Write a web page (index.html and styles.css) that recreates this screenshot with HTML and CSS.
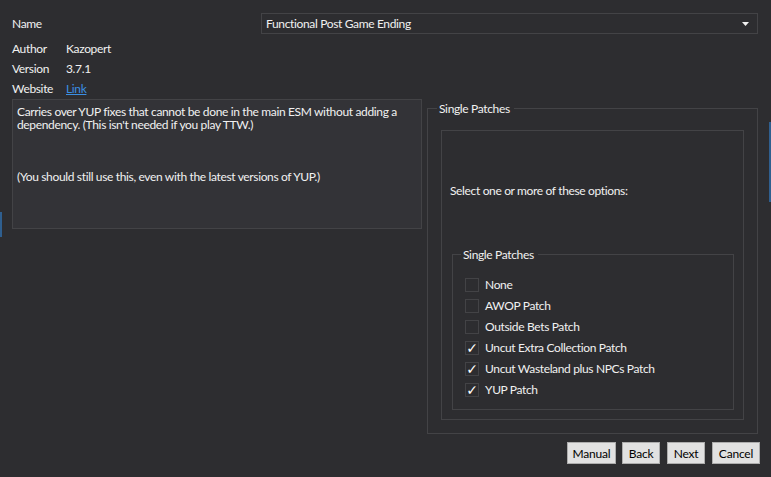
FILE: index.html
```html
<!DOCTYPE html>
<html>
<head>
<meta charset="utf-8">
<link rel="stylesheet" href="styles.css">
</head>
<body>
<div class="page">
  <div class="name-row">
    <span class="label">Name</span>
    <div class="dropdown">
      <span>Functional Post Game Ending</span>
      <svg class="arrow" width="8" height="5" viewBox="0 0 8 5"><path d="M0 0H7L3.5 4Z" fill="#f1f1f1"/></svg>
    </div>
  </div>
  <div class="info">
    <div class="info-row"><span class="label">Author</span><span class="value">Kazopert</span></div>
    <div class="info-row"><span class="label">Version</span><span class="value">3.7.1</span></div>
    <div class="info-row"><span class="label">Website</span><a class="value link" href="#">Link</a></div>
  </div>
  <div class="main">
    <div class="desc">Carries over YUP fixes that cannot be done in the main ESM without adding a dependency. (This isn't needed if you play TTW.)



(You should still use this, even with the latest versions of YUP.)</div>
    <fieldset class="group outer">
      <legend>Single Patches</legend>
      <div class="panel">
        <p class="prompt">Select one or more of these options:</p>
        <fieldset class="group inner">
          <legend>Single Patches</legend>
          <div class="opt"><span class="box"></span><span>None</span></div>
          <div class="opt"><span class="box"></span><span>AWOP Patch</span></div>
          <div class="opt"><span class="box"></span><span>Outside Bets Patch</span></div>
          <div class="opt"><span class="box checked">✓</span><span>Uncut Extra Collection Patch</span></div>
          <div class="opt"><span class="box checked">✓</span><span>Uncut Wasteland plus NPCs Patch</span></div>
          <div class="opt"><span class="box checked">✓</span><span>YUP Patch</span></div>
        </fieldset>
      </div>
    </fieldset>
  </div>
  <div class="buttons">
    <button class="btn btn-manual">Manual</button>
    <button class="btn btn-back">Back</button>
    <button class="btn btn-next">Next</button>
    <button class="btn btn-cancel">Cancel</button>
  </div>
</div>
<div class="edge edge-left"></div>
<div class="edge edge-right"></div>
</body>
</html>
```

FILE: styles.css
```css
html, body {
  margin: 0;
  padding: 0;
  background: #2d2d30;
  width: 771px;
  height: 477px;
  overflow: hidden;
}
body {
  font-family: Lato, "Noto Sans", sans-serif;
  font-size: 12px;
  line-height: 15px;
  letter-spacing: -0.35px;
  color: #f1f1f1;
  position: relative;
}
.page {
  display: flex;
  flex-direction: column;
  padding: 13px 12px 0 12px;
}
.name-row {
  display: flex;
  align-items: center;
  height: 21px;
}
.name-row .label {
  width: 249px;
}
.dropdown {
  box-sizing: border-box;
  width: 497px;
  height: 21px;
  border: 1px solid #434346;
  display: flex;
  align-items: center;
  justify-content: space-between;
  padding: 0 7px 0 4px;
}
.arrow { margin-top: 1px; }
.info {
  margin-top: 4px;
  display: flex;
  flex-direction: column;
}
.info-row {
  display: flex;
  align-items: center;
  height: 20px;
}
.info-row .label { width: 54px; }
.link {
  color: #3b8fe3;
  text-decoration: underline;
}
.main {
  display: flex;
  margin-top: 1px;
  gap: 5px;
}
.desc {
  box-sizing: border-box;
  width: 410px;
  height: 130px;
  background: #333337;
  border: 1px solid #434346;
  padding: 5px 4px 0 4px;
  white-space: pre-wrap;
  line-height: 13px;
}
.group {
  border: 1px solid #434346;
  margin: 0;
  min-width: 0;
}
.group legend {
  padding: 0 4px 0 2px;
  margin-left: -4px;
  line-height: 15px;
}
.outer {
  box-sizing: border-box;
  width: 331px;
  margin-top: 2px;
  padding: 14px 13px 13px 13px;
}
.panel {
  border: 1px solid #434346;
  padding: 52px 9px 9px 10px;
  display: flex;
  flex-direction: column;
}
.prompt {
  margin: 0 0 49px -2px;
}
.inner {
  padding: 12px 12px 9px 12px;
}
.opt {
  display: flex;
  align-items: center;
  height: 21px;
  gap: 6px;
}
.box {
  box-sizing: border-box;
  width: 14px;
  height: 14px;
  border: 1px solid #434346;
  display: flex;
  align-items: center;
  justify-content: center;
  font-size: 14px;
  line-height: 12px;
  letter-spacing: 0;
  color: #ffffff;
  font-family: "DejaVu Sans", sans-serif;
  font-weight: bold;
}
.buttons {
  display: flex;
  justify-content: flex-end;
  margin-top: 8px;
  margin-right: -1px;
  gap: 6px;
}
.btn {
  box-sizing: border-box;
  height: 22px;
  background: #e1e1e1;
  border: 1px solid #adadad;
  color: #000;
  font-family: Lato, "Noto Sans", sans-serif;
  font-size: 12px;
  letter-spacing: -0.2px;
  padding: 0;
  border-radius: 0;
}
.btn-manual { width: 49px; }
.btn-back { width: 38px; }
.btn-next { width: 38px; margin-left: 1px; }
.btn-cancel { width: 48px; margin-left: 1px; }
.edge {
  position: absolute;
  background: #2f5f8f;
}
.edge-left { left: 0; top: 212px; width: 2px; height: 25px; }
.edge-right { right: 0; top: 122px; width: 2px; height: 80px; }
```
